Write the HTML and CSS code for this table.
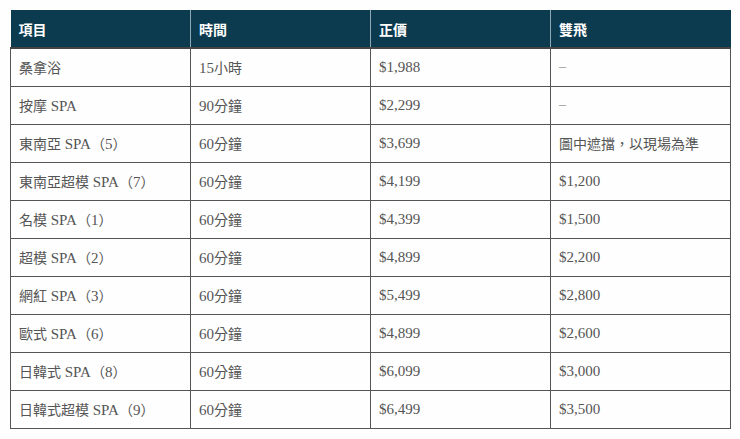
FILE: index.html
```html
<!DOCTYPE html>
<html lang="zh-Hant">
<head>
<meta charset="utf-8">
<link rel="stylesheet" href="styles.css">
</head>
<body>
<table class="price-table">
  <thead>
    <tr><th>項目</th><th>時間</th><th>正價</th><th>雙飛</th></tr>
  </thead>
  <tbody>
    <tr><td>桑拿浴</td><td><span class="en">15</span>小時</td><td class="en">$1,988</td><td class="dash">–</td></tr>
    <tr><td>按摩<span class="en"> SPA</span></td><td><span class="en">90</span>分鐘</td><td class="en">$2,299</td><td class="dash">–</td></tr>
    <tr><td>東南亞<span class="en"> SPA</span>（<span class="en">5</span>）</td><td><span class="en">60</span>分鐘</td><td class="en">$3,699</td><td>圖中遮擋，以現場為準</td></tr>
    <tr><td>東南亞超模<span class="en"> SPA</span>（<span class="en">7</span>）</td><td><span class="en">60</span>分鐘</td><td class="en">$4,199</td><td class="en">$1,200</td></tr>
    <tr><td>名模<span class="en"> SPA</span>（<span class="en">1</span>）</td><td><span class="en">60</span>分鐘</td><td class="en">$4,399</td><td class="en">$1,500</td></tr>
    <tr><td>超模<span class="en"> SPA</span>（<span class="en">2</span>）</td><td><span class="en">60</span>分鐘</td><td class="en">$4,899</td><td class="en">$2,200</td></tr>
    <tr><td>網紅<span class="en"> SPA</span>（<span class="en">3</span>）</td><td><span class="en">60</span>分鐘</td><td class="en">$5,499</td><td class="en">$2,800</td></tr>
    <tr><td>歐式<span class="en"> SPA</span>（<span class="en">6</span>）</td><td><span class="en">60</span>分鐘</td><td class="en">$4,899</td><td class="en">$2,600</td></tr>
    <tr><td>日韓式<span class="en"> SPA</span>（<span class="en">8</span>）</td><td><span class="en">60</span>分鐘</td><td class="en">$6,099</td><td class="en">$3,000</td></tr>
    <tr><td>日韓式超模<span class="en"> SPA</span>（<span class="en">9</span>）</td><td><span class="en">60</span>分鐘</td><td class="en">$6,499</td><td class="en">$3,500</td></tr>
  </tbody>
</table>
</body>
</html>
```
FILE: styles.css
```css
html, body {
  margin: 0;
  background: #fefefe;
}
body {
  padding: 10px 9px 10px 10px;
  font-family: "Liberation Serif", "Noto Sans CJK TC", serif;
  font-size: 14px;
  color: #555555;
}
.price-table {
  width: 721px;
  table-layout: fixed;
  border-collapse: collapse;
}
.price-table th,
.price-table td {
  height: 38px;
  padding: 0 8px;
  text-align: left;
  vertical-align: middle;
  box-sizing: border-box;
  white-space: nowrap;
}
.price-table th {
  background: #0c3a4e;
  color: #ffffff;
  font-weight: bold;
  font-size: 14px;
  border-left: 1px solid #8fa8b3;
}
.price-table th:first-child {
  border-left: none;
}
.price-table td {
  border: 1px solid #555555;
}
.price-table tbody tr:first-child td {
  border-top: 2px solid #444444;
}
.price-table .en {
  font-size: 15px;
}
.price-table .dash {
  color: #999999;
}
```
